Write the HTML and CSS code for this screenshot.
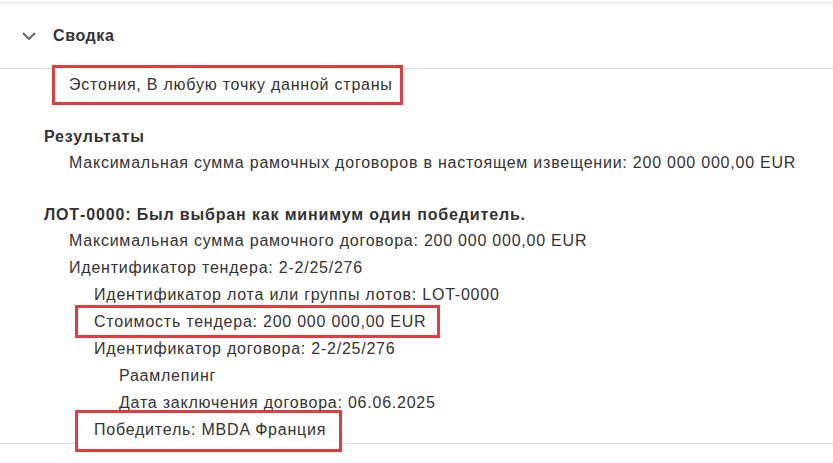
FILE: index.html
```html
<!DOCTYPE html>
<html lang="ru">
<head>
<meta charset="utf-8">
<title>Сводка</title>
<link rel="stylesheet" href="styles.css">
</head>
<body>
<section class="panel">
  <header class="panel-head">
    <svg class="chevron" width="14" height="8" viewBox="0 0 14 8"><polyline points="1,1 7,7 13,1" fill="none" stroke="#666" stroke-width="2"/></svg>
    <h2 class="panel-title">Сводка</h2>
  </header>
  <div class="panel-body">
    <div class="lvl1"><span class="mark mark-place">Эстония, В любую точку данной страны</span></div>

    <div class="group">
      <div class="group-title">Результаты</div>
      <div class="lvl1 item">Максимальная сумма рамочных договоров в настоящем извещении: 200 000 000,00 EUR</div>
    </div>

    <div class="group">
      <div class="group-title">ЛОТ-0000: Был выбран как минимум один победитель.</div>
      <div class="lvl1 item">Максимальная сумма рамочного договора: 200 000 000,00 EUR</div>
      <div class="lvl1 item">Идентификатор тендера: 2-2/25/276</div>
      <div class="lvl2 item">Идентификатор лота или группы лотов: LOT-0000</div>
      <div class="lvl2 item"><span class="mark mark-value">Стоимость тендера: 200 000 000,00 EUR</span></div>
      <div class="lvl2 item">Идентификатор договора: 2-2/25/276</div>
      <div class="lvl3 item">Раамлепинг</div>
      <div class="lvl3 item">Дата заключения договора: 06.06.2025</div>
      <div class="lvl2 item"><span class="mark mark-winner">Победитель: MBDA Франция</span></div>
    </div>
  </div>
</section>
</body>
</html>
```

FILE: styles.css
```css
html, body {
  margin: 0;
  padding: 0;
  background: #fff;
}
body {
  font-family: "Liberation Sans", Arial, sans-serif;
  font-size: 16px;
  letter-spacing: 0.77px;
  color: #333;
  min-height: 463px;
}
.panel {
  padding-top: 2px;
}
.panel-head {
  display: flex;
  align-items: center;
  height: 65px;
  padding-left: 22px;
  border-top: 1px solid #ddd;
  border-bottom: 1px solid #ddd;
}
.chevron {
  display: block;
  margin-right: 17px;
}
.panel-title {
  margin: 0;
  font-size: 16px;
  font-weight: bold;
  letter-spacing: 0.6px;
  color: #333;
}
.panel-body {
  padding-left: 44px;
  border-bottom: 1px solid #ddd;
}
.lvl1 { padding-left: 25px; }
.lvl2 { padding-left: 50px; }
.lvl3 { padding-left: 75px; }
.group {
  margin-top: 20px;
}
.group + .group {
  margin-top: 27px;
}
.group-title {
  font-weight: bold;
  line-height: 24px;
  letter-spacing: 0.85px;
}
.item {
  line-height: 27px;
}
.mark {
  display: inline-block;
  position: relative;
  background: #fff;
  border: 3px solid #e53b3f;
}
.mark-place {
  line-height: 34px;
  margin-top: -4px;
  margin-left: -17px;
  padding: 0 7px 0 14px;
}
.mark-value {
  margin: -3px 0 -3px -19px;
  padding: 0 11px 0 16px;
  vertical-align: top;
}
.mark-winner {
  margin: -6px 0 -10px -19px;
  padding: 3px 13px 6px 16px;
  vertical-align: top;
}
```
